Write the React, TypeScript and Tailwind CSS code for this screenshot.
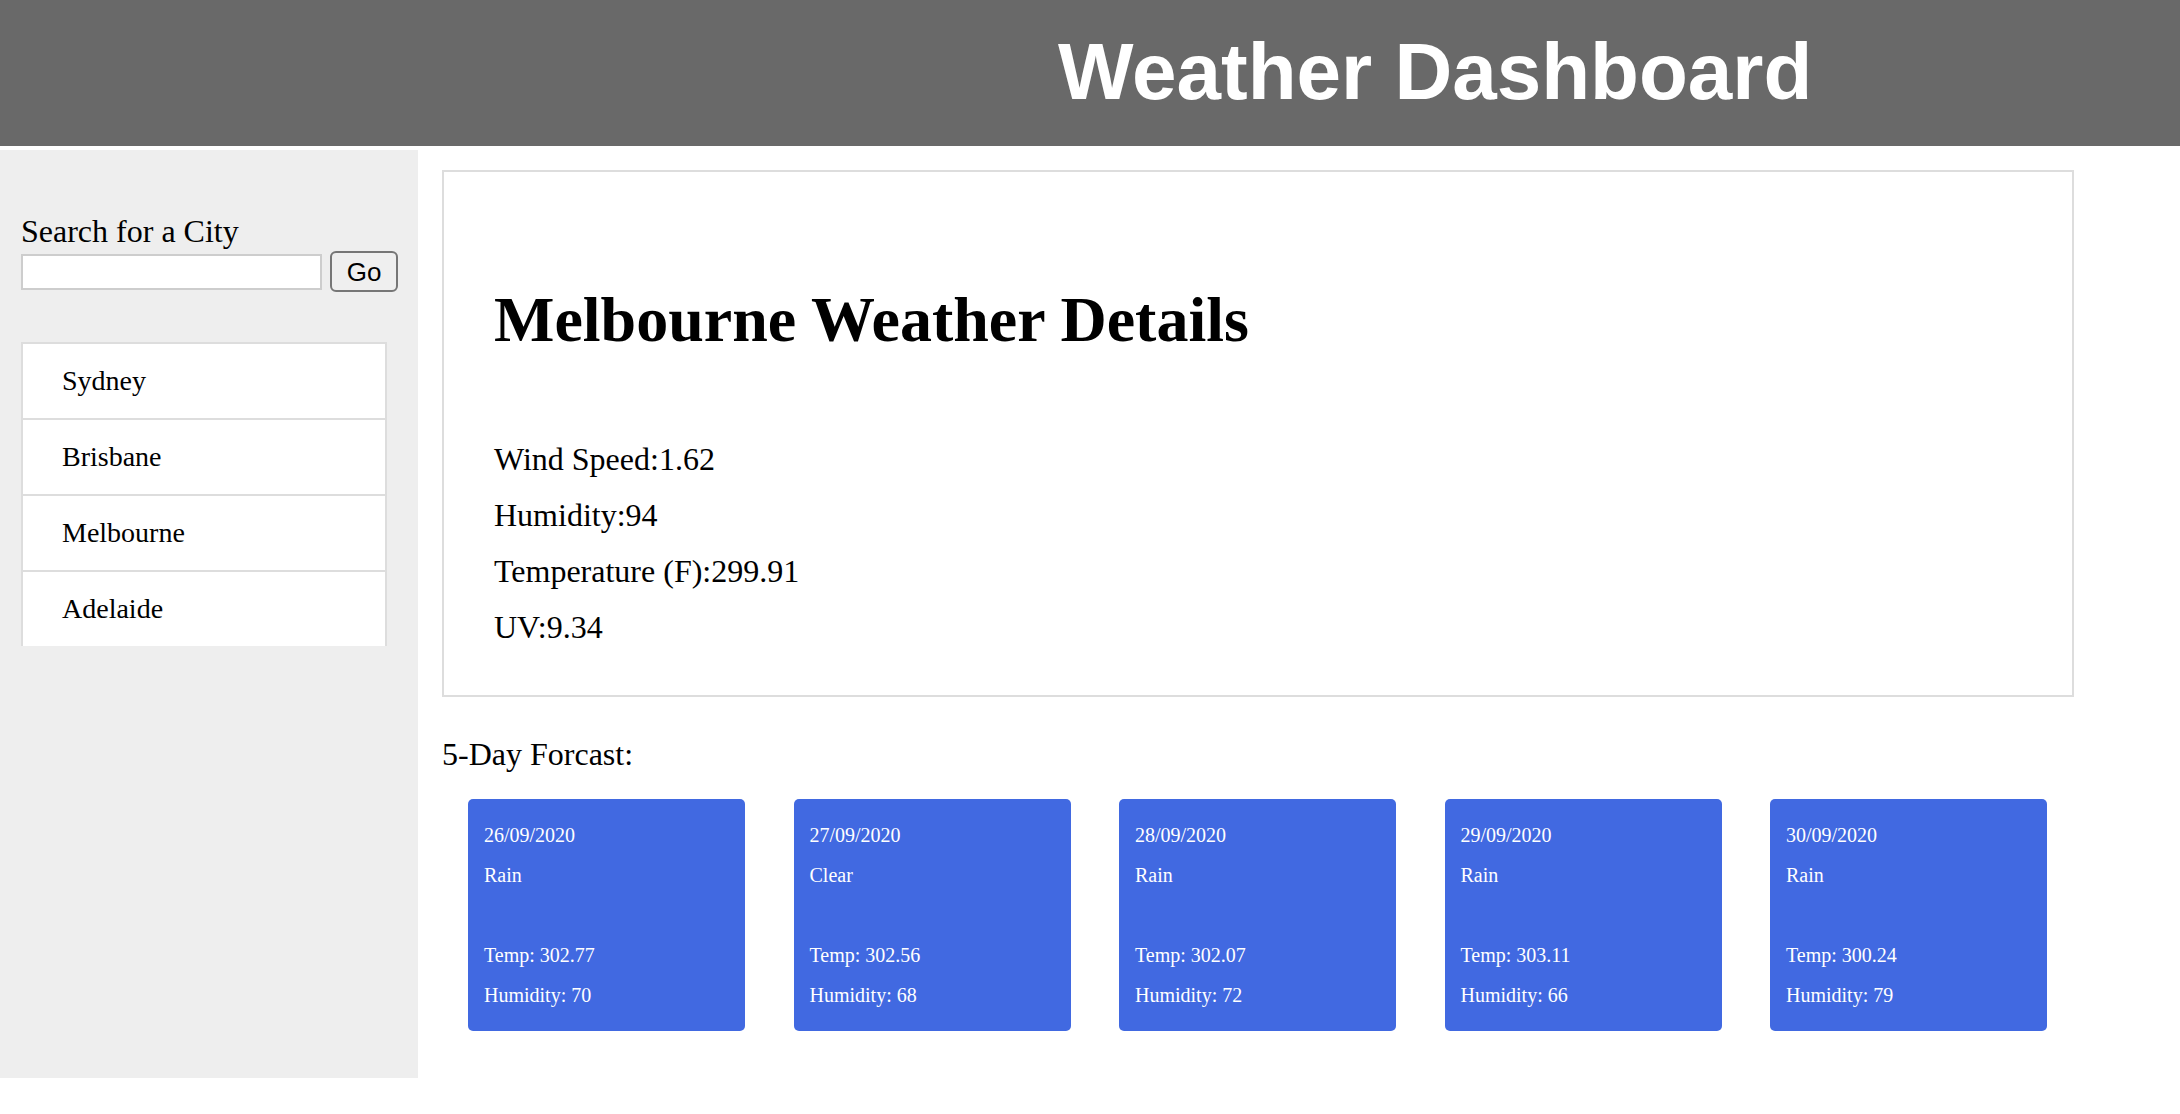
import React from 'react';

// Weather dashboard: header, city sidebar, current details and 5-day forecast

const cities = ['Sydney', 'Brisbane', 'Melbourne', 'Adelaide'];

const forecast = [
  { date: '26/09/2020', desc: 'Rain', temp: '302.77', humidity: '70' },
  { date: '27/09/2020', desc: 'Clear', temp: '302.56', humidity: '68' },
  { date: '28/09/2020', desc: 'Rain', temp: '302.07', humidity: '72' },
  { date: '29/09/2020', desc: 'Rain', temp: '303.11', humidity: '66' },
  { date: '30/09/2020', desc: 'Rain', temp: '300.24', humidity: '79' },
];

function Sidebar() {
  return (
    <aside className="w-[418px] h-[928px] shrink-0 bg-[#eeeeee] pt-[63px] pl-[21px]">
      <div className="text-[32px] leading-[37px] text-black">Search for a City</div>
      <div className="mt-[1px] flex items-center gap-[8px]">
        <input
          type="text"
          className="w-[301px] h-[36px] border-2 border-[#cdcdcd] bg-white px-1 outline-none"
        />
        <button
          type="button"
          className="w-[68px] h-[41px] border-2 border-[#767676] rounded-[6px] bg-[#efefef] text-[26px] leading-none text-black"
          style={{ fontFamily: '"Liberation Sans", Arial, sans-serif' }}
        >
          Go
        </button>
      </div>

      <ul className="mt-[50px] w-[366px] h-[304px] overflow-hidden">
        {cities.map((city) => (
          <li
            key={city}
            className="h-[76px] border-t-2 border-x-2 border-[#dddddd] bg-white pl-[39px] text-[28px] leading-[74px] text-black"
          >
            {city}
          </li>
        ))}
      </ul>
    </aside>
  );
}

function CurrentWeather() {
  return (
    <section className="w-[1632px] border-2 border-[#dddddd] pl-[50px] pt-[111px] pb-[40px]">
      <h1 className="text-[64px] leading-[74px] font-bold text-black">Melbourne Weather Details</h1>
      <div className="mt-[74px] text-[32px] leading-[56px] text-black">
        <p>Wind Speed:1.62</p>
        <p>Humidity:94</p>
        <p>Temperature (F):299.91</p>
        <p>UV:9.34</p>
      </div>
    </section>
  );
}

function Forecast() {
  return (
    <section className="mt-[39px]">
      <h2 className="text-[32px] leading-[37px] text-black">5-Day Forcast:</h2>
      <div className="mt-[26px] pl-[26px] flex gap-[48.5px]">
        {forecast.map((day) => (
          <div
            key={day.date}
            className="w-[277px] h-[232px] rounded-[5px] bg-[#4169e1] p-[16px] text-white text-[20px] leading-[40px]"
          >
            <p>{day.date}</p>
            <p>{day.desc}</p>
            <p className="h-[40px]"></p>
            <p>Temp: {day.temp}</p>
            <p>Humidity: {day.humidity}</p>
          </div>
        ))}
      </div>
    </section>
  );
}

export default function App() {
  return (
    <div
      className="min-h-[1114px] bg-white"
      style={{ fontFamily: '"Liberation Serif", "Times New Roman", serif' }}
    >
      <header className="h-[146px] bg-[#696969] pt-[26px] pl-[1058px]">
        <div
          className="text-[80px] leading-[92px] font-bold text-white"
          style={{ fontFamily: '"Liberation Sans", Arial, sans-serif' }}
        >
          Weather Dashboard
        </div>
      </header>

      <div className="mt-[4px] flex">
        <Sidebar />
        <main className="pl-[24px] pt-[20px]">
          <CurrentWeather />
          <Forecast />
        </main>
      </div>
    </div>
  );
}
